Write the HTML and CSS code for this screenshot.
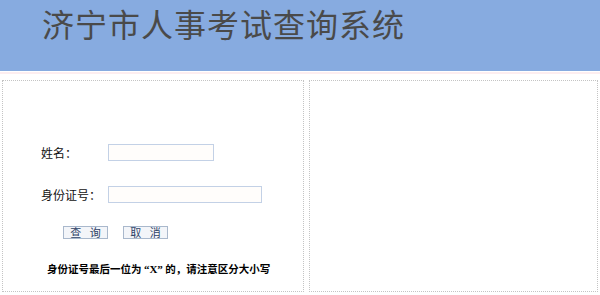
FILE: index.html
```html
<!DOCTYPE html>
<html lang="zh-CN">
<head>
<meta charset="utf-8">
<title>济宁市人事考试查询系统</title>
<link rel="stylesheet" href="styles.css">
</head>
<body>
<div class="header"><h1 class="title">济宁市人事考试查询系统</h1></div>
<div class="sep"></div>
<div class="main">
  <div class="panel panel-left">
    <div class="row">
      <span class="label">姓名：</span>
      <input class="field field-name" type="text">
    </div>
    <div class="row row-id">
      <span class="label">身份证号：</span>
      <input class="field field-id" type="text">
    </div>
    <div class="buttons">
      <button class="btn" type="button">查 询</button>
      <button class="btn" type="button">取 消</button>
    </div>
    <p class="note">身份证号最后一位为 <span class="latin">“X”</span> 的，请注意区分大小写</p>
  </div>
  <div class="panel panel-right"></div>
</div>
</body>
</html>
```
FILE: styles.css
```css
html, body {
  margin: 0;
  padding: 0;
  background: #ffffff;
  font-family: "Noto Sans CJK SC", "Liberation Sans", sans-serif;
  font-size: 12px;
  color: #000;
}
.header {
  height: 71px;
  background: #87abe0;
}
.title {
  margin: 0;
  padding: 0 0 0 42px;
  font-family: "Noto Sans CJK SC", serif;
  font-weight: normal;
  font-size: 32px;
  line-height: normal;
  letter-spacing: 1px;
  color: #4a4a4a;
}
.sep {
  height: 2px;
  margin-top: 1px;
  background: #fdeef0;
}
.main {
  display: flex;
  gap: 5px;
  padding: 6px 0 0 2px;
}
.panel {
  border: 1px dotted #c4c4c4;
  height: 210px;
  box-sizing: content-box;
}
.panel-left {
  width: 300px;
  display: flex;
  flex-direction: column;
  padding-top: 63px;
  height: 147px;
}
.panel-right {
  width: 287px;
}
.row {
  display: flex;
  align-items: center;
  height: 17px;
  padding-left: 38px;
}
.row-id {
  margin-top: 25px;
}
.label {
  width: 67px;
  line-height: 17px;
  color: #111;
}
.field {
  box-sizing: border-box;
  height: 17px;
  margin: 0;
  padding: 0 2px;
  border: 1px solid #c3d1e6;
  background: #fffdfb;
  font-size: 12px;
}
.field-name { width: 106px; }
.field-id { width: 154px; }
.buttons {
  display: flex;
  gap: 15px;
  margin-top: 23px;
  padding-left: 60px;
}
.btn {
  box-sizing: border-box;
  width: 45px;
  height: 13px;
  margin: 0;
  padding: 0;
  border: 1px solid #a9b8cc;
  background: #f3f5f9;
  font-family: "Noto Sans CJK SC", sans-serif;
  font-size: 11px;
  line-height: 11px;
  letter-spacing: 3px;
  text-indent: 3px;
  color: #2e4266;
}
.note {
  margin: 23px 0 0 44px;
  font-size: 10.5px;
  line-height: 14px;
  font-weight: bold;
  color: #000;
  white-space: nowrap;
}
.latin {
  font-family: "Liberation Serif", serif;
  font-size: 11px;
}
```
